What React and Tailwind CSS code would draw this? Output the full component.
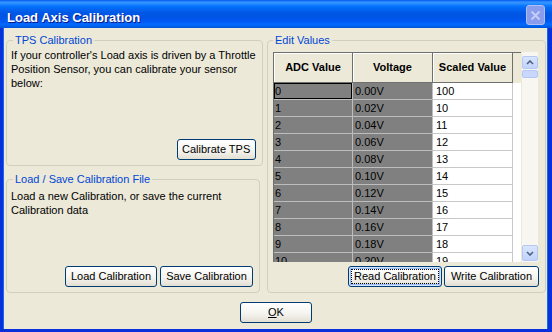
import React from "react";

const rows = Array.from({ length: 11 }, (_, i) => ({
  adc: i,
  volt: (i * 0.02).toFixed(2) + "V",
  scaled: i === 0 ? 100 : 9 + i,
}));

function XpButton({ w, focused, children }) {
  return (
    <button
      className={`${w} h-[21px] rounded-[3px] border border-[#003c74] bg-[linear-gradient(to_bottom,#ffffff,#f5f4ef_55%,#e3dfd3)] text-[11px] leading-none text-black ${
        focused ? "p-[2px] shadow-[inset_0_0_0_1px_#cee7ff,inset_0_0_0_2px_#98b8f8]" : ""
      }`}
    >
      {focused ? (
        <span className="flex h-full w-full items-center justify-center border border-dotted border-black">
          {children}
        </span>
      ) : (
        children
      )}
    </button>
  );
}

function ScrollBtn({ up, h }) {
  return (
    <div
      className={`${h} flex items-center justify-center rounded-[2px] border border-[#b4c8f6] bg-[linear-gradient(to_bottom,#dae5fd,#c1d3fb)]`}
    >
      <svg width="8" height="5" viewBox="0 0 8 5">
        <path
          d={up ? "M1 4 L4 1 L7 4" : "M1 1 L4 4 L7 1"}
          fill="none"
          stroke="#4d6185"
          strokeWidth="1.6"
        />
      </svg>
    </div>
  );
}

export default function App() {
  return (
    <div className="flex h-[332px] w-[552px] flex-col bg-[#0831d9] font-['Liberation_Sans',Arial,sans-serif] text-[11px] text-black">
      {/* title bar */}
      <div className="flex h-[28px] items-start justify-between bg-[linear-gradient(to_bottom,#0058ee_0px,#3593ff_2px,#288eff_4px,#127dff_5px,#036ffc_7px,#0262ee_10px,#0057e5_13px,#0054e3_16px,#0055eb_19px,#005bf5_22px,#026afe_24px,#0062ef_26px,#0052d6_28px)]">
        <div className="pl-[7px] pt-[10px] text-[13px] font-bold leading-[16px] text-white [text-shadow:1px_1px_0_#0a1883]">
          Load Axis Calibration
        </div>
        <div className="mr-[7px] mt-[5px] flex h-[20px] w-[19px] items-center justify-center rounded-[3px] border border-[#b3bff2] bg-[#8a9cec]">
          <svg width="11" height="11" viewBox="0 0 11 11">
            <path d="M1.5 1.5 L9.5 9.5 M9.5 1.5 L1.5 9.5" stroke="#c4cdf5" strokeWidth="2" />
          </svg>
        </div>
      </div>

      {/* body */}
      <div className="mb-[3px] ml-[3px] mr-[4px] flex flex-1 flex-col border-x border-[#166aee] bg-[#ece9d8] pl-[2px] pr-[1px] pt-[5px]">
        <div className="flex h-[260px] gap-[7px]">
          <div className="flex w-[254px] flex-col gap-[6px]">
            <fieldset className="h-[133px] rounded-[4px] border border-[#d0d0bf] pb-[5px] pl-[4px] pr-[6px]">
              <legend className="ml-[2px] px-[2px] leading-[14px] text-[#0046d5]">TPS Calibration</legend>
              <div className="flex h-[113px] flex-col">
                <p className="mt-[1px] whitespace-nowrap leading-[14px]">
                  If your controller's Load axis is driven by a Throttle
                  <br />
                  Position Sensor, you can calibrate your sensor
                  <br />
                  below:
                </p>
                <div className="mt-auto flex justify-end">
                  <XpButton w="w-[79px]">Calibrate TPS</XpButton>
                </div>
              </div>
            </fieldset>

            <fieldset className="h-[121px] rounded-[4px] border border-[#d0d0bf] pb-[5px] pl-[4px] pr-[6px]">
              <legend className="ml-[2px] px-[2px] leading-[14px] text-[#0046d5]">Load / Save Calibration File</legend>
              <div className="flex h-[101px] flex-col">
                <p className="mt-[3px] whitespace-nowrap leading-[14px]">
                  Load a new Calibration, or save the current
                  <br />
                  Calibration data
                </p>
                <div className="mt-auto flex justify-end gap-[3px]">
                  <XpButton w="w-[92px]">Load Calibration</XpButton>
                  <XpButton w="w-[93px]">Save Calibration</XpButton>
                </div>
              </div>
            </fieldset>
          </div>

          <fieldset className="h-[260px] w-[279px] rounded-[4px] border border-[#d0d0bf] pb-[5px] pl-[5px] pr-[6px]">
            <legend className="px-[2px] leading-[14px] text-[#0046d5]">Edit Values</legend>
            <div className="flex h-[240px] flex-col">
              <div className="mt-[5px] flex h-[210px]">
                <div className="h-[210px] w-[248px] overflow-hidden border-l border-t border-[#6f6f6f] bg-white">
                  <div className="flex h-[30px] bg-[#ece9d8] font-bold">
                    {["ADC Value", "Voltage", "Scaled Value"].map((h, i) => (
                      <div
                        key={h}
                        className={`${i === 0 ? "w-[79px]" : "w-[80px]"} flex items-center justify-center border-b border-r border-[#6f6f6f] shadow-[inset_1px_1px_0_#ffffff]`}
                      >
                        {h}
                      </div>
                    ))}
                  </div>
                  {rows.map((r) => (
                    <div key={r.adc} className="flex h-[17px] leading-[17px]">
                      <div
                        className={`w-[79px] border-b border-r border-[#bdbdbd] bg-[#808080] pl-[1px] ${
                          r.adc === 0 ? "shadow-[inset_0_0_0_1px_#000000]" : ""
                        }`}
                      >
                        {r.adc}
                      </div>
                      <div className="w-[80px] border-b border-r border-[#bdbdbd] bg-[#808080] pl-[2px]">{r.volt}</div>
                      <div className="w-[80px] border-b border-r border-[#c8c8c8] bg-white pl-[3px]">{r.scaled}</div>
                    </div>
                  ))}
                </div>
                <div className="ml-[1px] flex w-[16px] flex-col bg-[#f7f6f1] pb-[1px] pt-[4px]">
                  <ScrollBtn up h="h-[13px]" />
                  <div className="mt-[1px] h-[8px] rounded-[2px] border border-[#b4c8f6] bg-[#c8d7fb]" />
                  <div className="flex-1" />
                  <ScrollBtn h="h-[16px]" />
                </div>
              </div>
              <div className="mt-auto flex justify-end gap-[2px]">
                <XpButton w="w-[94px]" focused>
                  Read Calibration
                </XpButton>
                <XpButton w="w-[95px]">Write Calibration</XpButton>
              </div>
            </div>
          </fieldset>
        </div>

        <div className="mt-[9px] flex justify-center">
          <XpButton w="w-[72px]">
            <span className="underline">O</span>K
          </XpButton>
        </div>
      </div>
    </div>
  );
}
